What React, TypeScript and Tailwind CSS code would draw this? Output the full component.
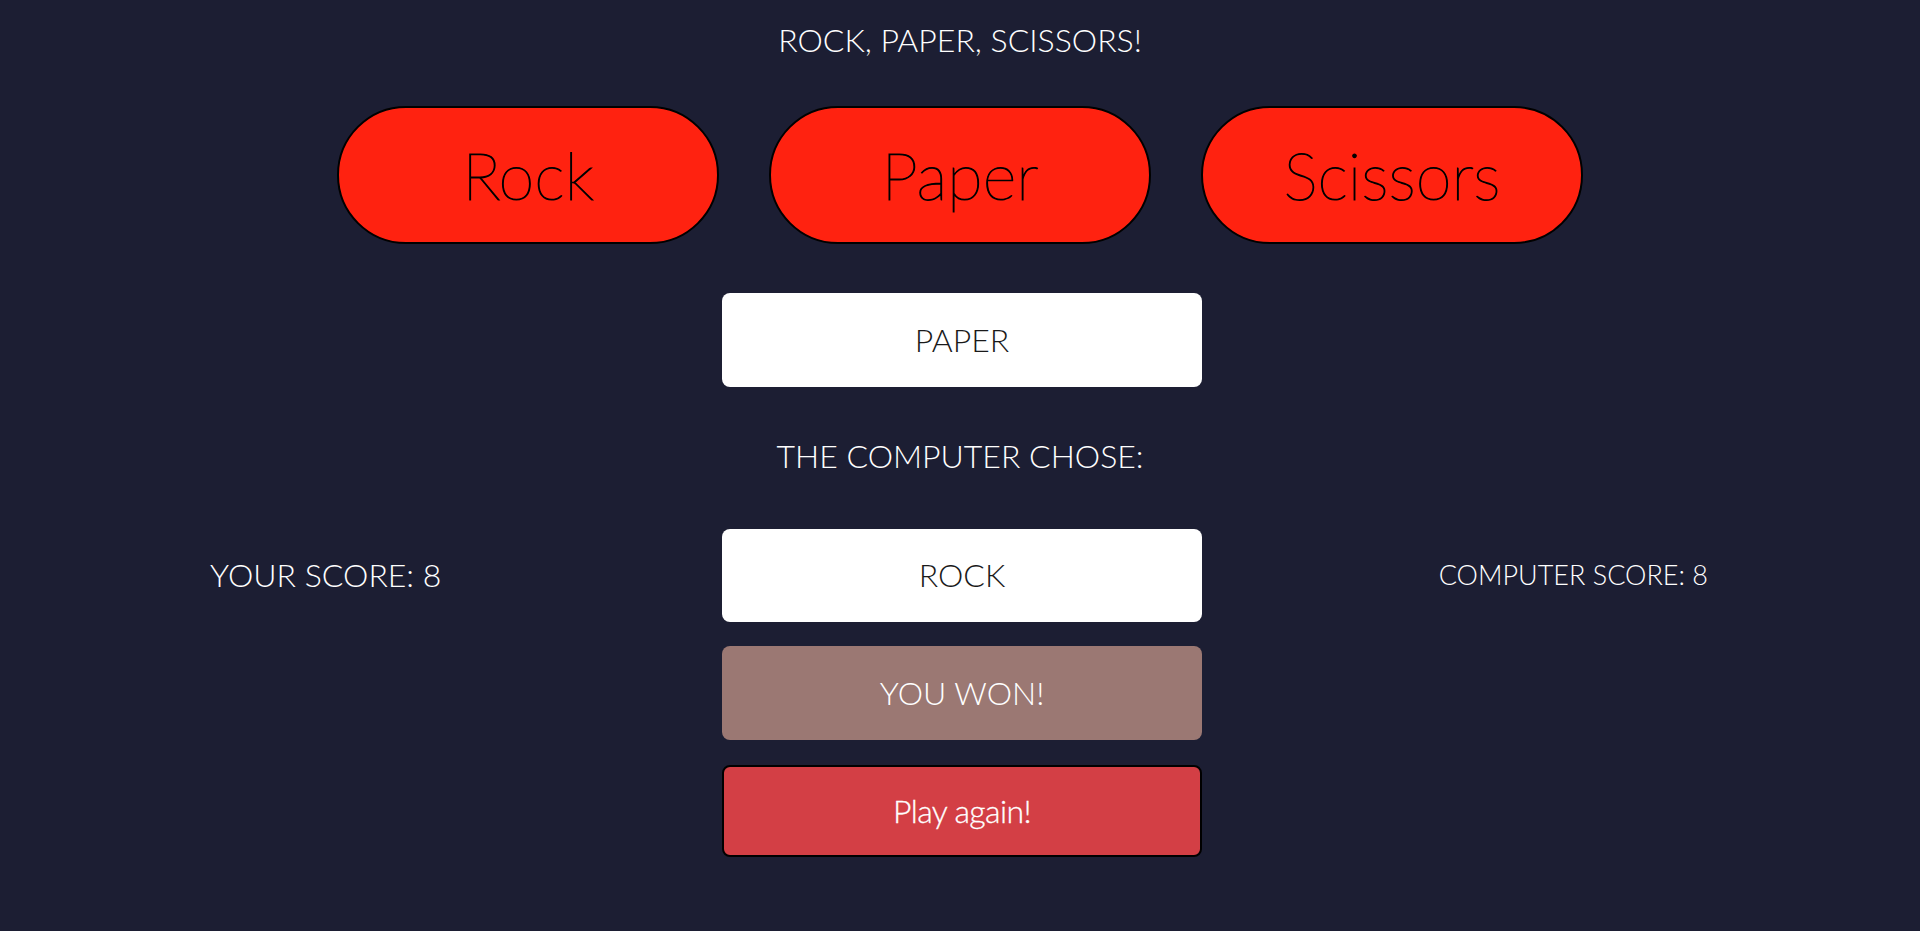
import React from "react";

const choices = ["Rock", "Paper", "Scissors"];

const App = () => {
  return (
    <div className="min-h-screen w-full bg-[#1c1e33] font-['Lato',sans-serif] leading-[1.2] flex flex-col items-center">
      <h1 className="mt-[21px] text-[32px] font-light text-white">ROCK, PAPER, SCISSORS!</h1>

      <div className="mt-[47px] flex gap-[50px]">
        {choices.map((c) => (
          <button
            key={c}
            className="w-[382px] h-[138px] rounded-full border-2 border-black bg-[#ff2210] text-[65px] font-thin [-webkit-text-stroke:1.1px_black] text-black flex items-center justify-center"
          >
            {c}
          </button>
        ))}
      </div>

      <div className="mt-[49px] ml-1 w-[480px] h-[94px] rounded-lg bg-white flex items-center justify-center text-[32px] font-light text-[#1a1a1a]">
        PAPER
      </div>

      <p className="mt-[50px] text-[32px] font-light text-white">THE COMPUTER CHOSE:</p>

      <div className="mt-[53px] w-full grid grid-cols-[722px_480px_1fr] items-center">
        <p className="pl-[210px] text-[32px] font-light text-white">YOUR SCORE: 8</p>
        <div className="h-[93px] rounded-lg bg-white flex items-center justify-center text-[32px] font-light text-[#1a1a1a]">
          ROCK
        </div>
        <p className="pr-[212px] text-right text-[27px] font-light text-white">COMPUTER SCORE: 8</p>
      </div>

      <div className="mt-[24px] ml-1 w-[480px] h-[94px] rounded-lg bg-[#9b7873] flex items-center justify-center text-[32px] font-light text-white">
        YOU WON!
      </div>

      <button className="mt-[25px] ml-1 w-[480px] h-[92px] rounded-lg border-2 border-black bg-[#d33f45] flex items-center justify-center text-[32px] font-light tracking-[-0.6px] [-webkit-text-stroke:0.3px_white] text-white">
        Play again!
      </button>
    </div>
  );
};

export default App;
